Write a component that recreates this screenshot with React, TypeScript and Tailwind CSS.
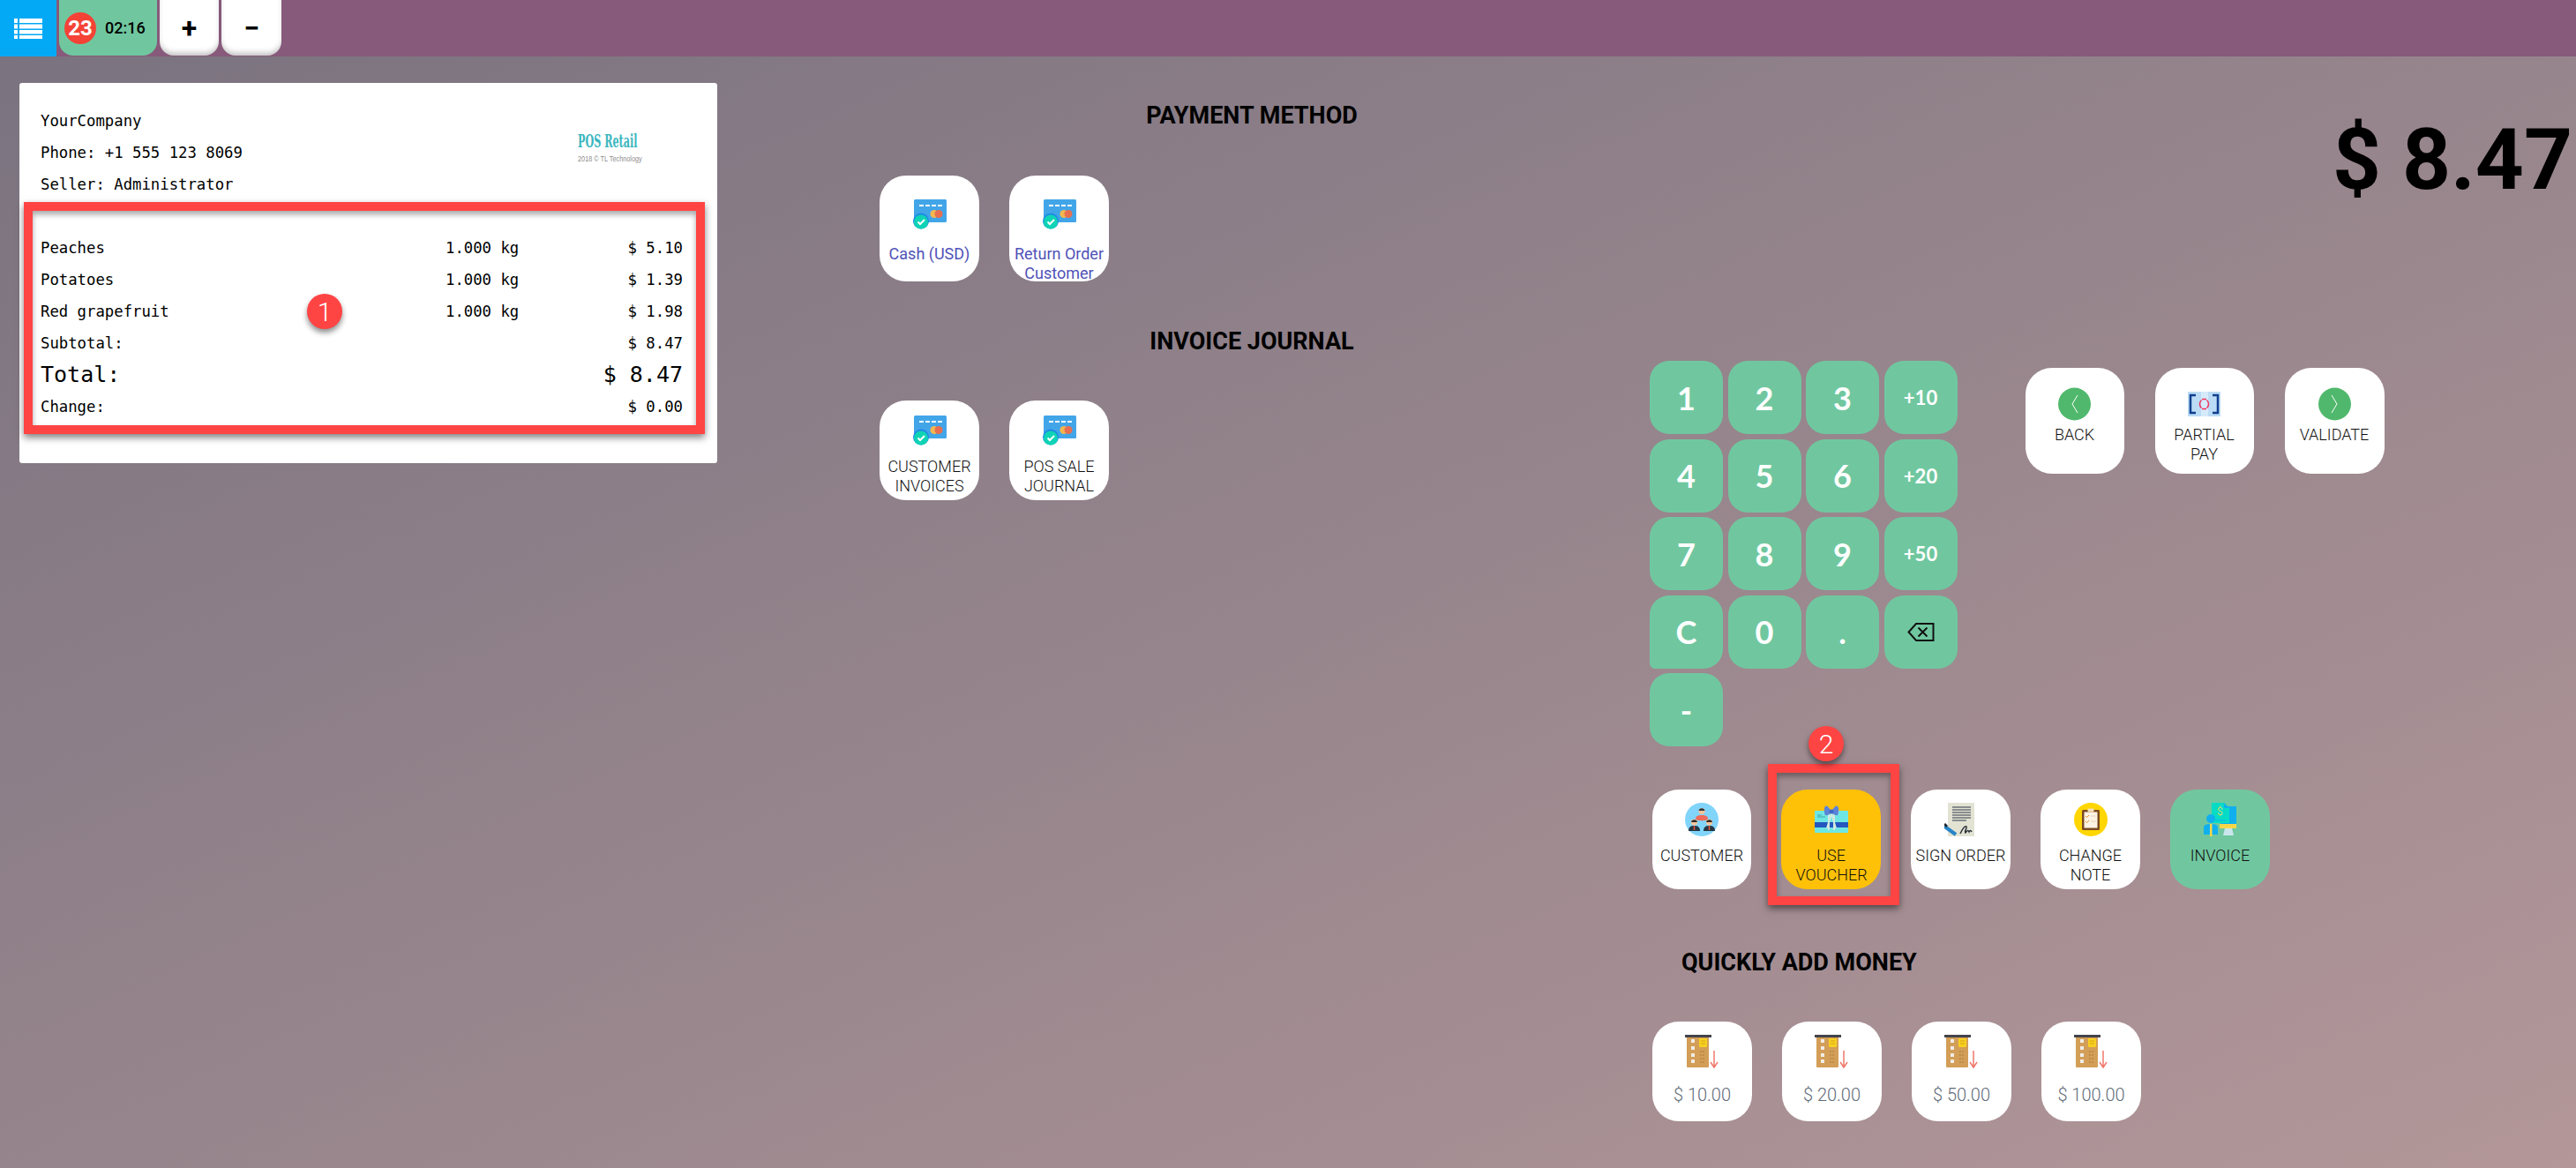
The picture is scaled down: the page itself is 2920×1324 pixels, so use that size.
import React from "react";

const roboto = "font-['Roboto',sans-serif]";

const CardIcon = () => (
  <svg width="38" height="34" viewBox="0 0 38 34" className="shrink-0">
    <rect x="1" y="0" width="37" height="26" rx="1.5" fill="#42a5e8" />
    <path d="M7 7h5M14 7h5M21 7h5M28 7h5" stroke="#fff" strokeWidth="2" />
    <circle cx="24" cy="16.5" r="4.5" fill="#f4b750" />
    <circle cx="29" cy="16.5" r="4.5" fill="#e76f51" />
    <circle cx="9" cy="24.5" r="9" fill="#1e88e5" />
    <circle cx="9" cy="25.5" r="8" fill="#0fd3b5" />
    <path d="M5.5 25.5l2.5 2.5 5-5" fill="none" stroke="#fff" strokeWidth="2" />
  </svg>
);

const ArrowCircle = ({ dir }: { dir: "left" | "right" }) => (
  <svg width="37" height="38" viewBox="0 0 37 38">
    <circle cx="18.5" cy="19" r="18.5" fill="#50b86c" />
    <path d={dir === "left" ? "M22 9l-6 10 6 10" : "M15 9l6 10-6 10"} fill="none" stroke="#fff" strokeWidth="1" />
  </svg>
);

const PartialIcon = () => (
  <svg width="37" height="28" viewBox="0 0 37 28">
    <rect width="37" height="28" fill="#bcdcf5" />
    <rect x="15" width="8" height="28" fill="#d6ebfa" />
    <path d="M9 4H3v20h6M28 4h6v20h-6" fill="none" stroke="#0f3f8f" strokeWidth="2.500" />
    <path d="M15.500 9.500a6 6 0 0 0 0 9M21.500 9.500a6 6 0 0 1 0 9M16 8.500h5M16 19.500h5" fill="none" stroke="#f0325a" strokeWidth="1.500" />
  </svg>
);

const CustomerIcon = () => (
  <svg width="38" height="38" viewBox="0 0 38 38">
    <circle cx="19" cy="19" r="19" fill="#81d4fa" />
    <path d="M12 18c0-3 3-4 7-4s7 1 7 4-14 3-14 0z" fill="#ef6a5a" />
    <circle cx="19" cy="9.500" r="3.600" fill="#f6c49a" />
    <path d="M15.500 9a3.600 3.600 0 0 1 7 0z" fill="#26323d" />
    <path d="M4 32c0-5 3-6 6.500-6s6.500 1 6.500 6z" fill="#263744" />
    <circle cx="10.500" cy="22" r="3.600" fill="#f6c49a" />
    <path d="M7 22a3.600 3.600 0 0 1 7 0z" fill="#2f2a28" />
    <path d="M21 32c0-5 3-6 6.500-6s6.500 1 6.500 6z" fill="#263744" />
    <circle cx="27.500" cy="22" r="3.600" fill="#f6c49a" />
    <path d="M24 22a3.600 3.600 0 0 1 7 0z" fill="#2f2a28" />
    <path d="M10.500 26v5M27.500 26v5" stroke="#e5533d" strokeWidth="1.500" />
  </svg>
);

const VoucherIcon = () => (
  <svg width="38" height="38" viewBox="0 0 38 38">
    <rect x="0" y="9" width="38" height="25" rx="1" fill="#6ee7e4" />
    <rect x="0" y="22" width="38" height="6" fill="#2457c0" />
    <path d="M3 14h5M3 16h9" stroke="#3aa7a7" strokeWidth="1" />
    <path d="M16 12L16 31M22 12L22 31M19 12L14 29M19 12L24 29" stroke="#cfe9df" strokeWidth="2" />
    <path d="M19 10C15 3 13 3 12 4c-2 2-1 9 0 10 2 1 6-1 7-4zM19 10c4-7 6-7 7-6 2 2 1 9 0 10-2 1-6-1-7-4z" fill="#5b84d8" />
    <circle cx="19" cy="10" r="2.500" fill="#3f66c4" />
  </svg>
);

const SignIcon = () => (
  <svg width="38" height="38" viewBox="0 0 38 38">
    <rect x="4" y="0" width="30" height="38" fill="#e2e3d3" />
    <path d="M9 5h21M9 8h21M9 11h21M9 14h21M9 17h21M9 20h16" stroke="#6b7278" strokeWidth="1.500" />
    <path d="M-1 26l14 10" stroke="#2785c9" strokeWidth="4" />
    <path d="M0 24l3 3" stroke="#1f2a33" strokeWidth="3" />
    <path d="M18 35c3-6 5-9 7-8 1 2-3 6-1 7 2-3 3-3 4-1 1-2 2-2 3 0" fill="none" stroke="#2b3138" strokeWidth="1.500" />
  </svg>
);

const NoteIcon = () => (
  <svg width="38" height="38" viewBox="0 0 38 38">
    <circle cx="19" cy="19" r="19" fill="#ffd600" />
    <rect x="9" y="8" width="20" height="23" rx="1.500" fill="#7b4a21" />
    <rect x="11.500" y="10.500" width="15" height="18" fill="#fdf3e4" />
    <rect x="15.500" y="6.500" width="7" height="4" rx="1" fill="#f5deb8" />
    <path d="M13 15l1.500 1.500 2.500-2.500M13 21l1.500 1.500 2.500-2.500" fill="none" stroke="#ef8a1f" strokeWidth="1" />
    <path d="M19 15h6M19 21h6" stroke="#e3d6bf" strokeWidth="1" />
  </svg>
);

const InvoiceIcon = () => (
  <svg width="38" height="38" viewBox="0 0 38 38">
    <rect x="19" y="4" width="18" height="22" fill="#10b0ee" />
    <path d="M9 0h14l6 6v17H9z" fill="#06dcc5" />
    <path d="M23 0l6 6h-6z" fill="#10b0ee" />
    <text x="15" y="14" fontSize="12" fontFamily="Roboto" fill="#ffd54f">$</text>
    <path d="M13 20h12" stroke="#10b0ee" strokeWidth="1" />
    <rect x="18" y="24" width="19" height="5" fill="#f7d74a" />
    <path d="M24 29h8l2 8H22z" fill="#c9e6ee" />
    <circle cx="8" cy="18" r="5" fill="#10b0ee" />
    <path d="M0 36V28c0-3 3-4 8-4s8 1 8 4v8z" fill="#10b0ee" />
    <rect x="7" y="24" width="2.500" height="14" fill="#f7d74a" />
  </svg>
);

const MoneyIcon = () => (
  <svg width="39" height="38" viewBox="0 0 39 38">
    <rect x="2" y="1" width="25" height="36" rx="1" fill="#d39e57" />
    <rect x="0" y="0" width="30" height="3" fill="#43434b" />
    <path d="M7 5h4v4H7zM7 13h4v4H7zM7 21h4v4H7zM7 28h4v4H7z" fill="#f0ece6" />
    <rect x="16" y="4" width="9" height="10" rx="1" fill="#f7d020" />
    <path d="M18 7h5M18 10h5" stroke="#d9a514" strokeWidth="1" />
    <path d="M18 18v14M21 18v14" stroke="#a97a3d" strokeWidth="1" strokeDasharray="2 2" />
    <path d="M33 18v19M29 31l4 6 4-6" fill="none" stroke="#f0776a" strokeWidth="1.500" />
  </svg>
);

const BackspaceIcon = () => (
  <svg width="31" height="21" viewBox="0 0 31 21">
    <path d="M29.500 1H10L1.500 10.500 10 20h19.500z" fill="none" stroke="#111" strokeWidth="2" />
    <path d="M12.500 5.500l10 10M22.500 5.500l-10 10" stroke="#111" strokeWidth="2" />
  </svg>
);

// rows of the receipt: name, quantity, price
const lines = [
  { name: "Peaches", qty: "1.000 kg", price: "$ 5.10" },
  { name: "Potatoes", qty: "1.000 kg", price: "$ 1.39" },
  { name: "Red grapefruit", qty: "1.000 kg", price: "$ 1.98" },
];

const Receipt = () => (
  <div className="w-[791px] h-[431px] bg-white rounded-[3px] pl-6 pr-[39px] pt-[25px] font-['DejaVu_Sans_Mono',monospace] text-[17.3px] leading-9 text-black">
    <div className="flex justify-between">
      <div>
        <div>YourCompany</div>
        <div>Phone: +1 555 123 8069</div>
        <div>Seller: Administrator</div>
      </div>
      <div className="mt-[31px] mr-11 w-[75px]">
        <div className="origin-left scale-x-[0.56] font-['DejaVu_Serif',serif] font-bold text-[20px] leading-[20px] text-[#3bb6bf] whitespace-nowrap">POS Retail</div>
        <div className="origin-left scale-x-[0.77] font-['Liberation_Sans',sans-serif] text-[9.500px] leading-[20px] text-[#8d8d8d] whitespace-nowrap">2018 © TL Technology</div>
      </div>
    </div>
    <div className="mt-9">
      {lines.map((l) => (
        <div key={l.name} className="flex">
          <div className="w-[459px]">{l.name}</div>
          <div className="w-[135px]">{l.qty}</div>
          <div className="flex-1 text-right">{l.price}</div>
        </div>
      ))}
      <div className="flex justify-between">
        <div>Subtotal:</div>
        <div>$ 8.47</div>
      </div>
      <div className="flex justify-between text-[25px]">
        <div>Total:</div>
        <div>$ 8.47</div>
      </div>
      <div className="flex justify-between">
        <div>Change:</div>
        <div>$ 0.00</div>
      </div>
    </div>
  </div>
);

const Tile = ({
  icon,
  children,
  className = "",
  h = "h-[113px]",
  top = "pt-[15px]",
}: {
  icon: React.ReactNode;
  children: React.ReactNode;
  className?: string;
  h?: string;
  top?: string;
}) => (
  <div className={`${h} ${top} rounded-[30px] flex flex-col items-center overflow-hidden shrink-0 text-center text-[18px] leading-[22px] ${roboto} ${className}`}>
    <div className="h-[38px] shrink-0 flex items-center justify-center">{icon}</div>
    <div className="shrink-0">{children}</div>
  </div>
);

const Heading = ({ children, className = "" }: { children: React.ReactNode; className?: string }) => (
  <div className={`${roboto} font-bold text-[27px] leading-[30px] text-black ${className}`}>{children}</div>
);

const keys = ["1", "2", "3", "+10", "4", "5", "6", "+20", "7", "8", "9", "+50", "C", "0", ".", "", "-"];

const Numpad = () => (
  <div className="grid grid-cols-[repeat(4,83px)] auto-rows-[83px] gap-x-[5.500px] gap-y-[5.500px]">
    {keys.map((k, i) =>
      k === "" ? (
        <div key={i} className="bg-[#70c79f] rounded-[22px] flex items-center justify-center">
          <BackspaceIcon />
        </div>
      ) : (
        <div
          key={i}
          className={`bg-[#70c79f] rounded-[22px] flex items-center justify-center text-white font-['Lato',sans-serif] font-bold ${k.startsWith("+") ? "text-[22px]" : "text-[36px]"} ${k === "C" ? "rounded-bl-[6px]" : ""}`}
        >
          {k}
        </div>
      )
    )}
  </div>
);

const Marker = ({ n, className }: { n: number; className: string }) => (
  <div className={`absolute w-10 h-10 rounded-full bg-[#ff4444] text-white flex items-center justify-center text-[30px] shadow-[0_4px_6px_rgba(0,0,0,0.45)] ${roboto} font-light ${className}`}>
    {n}
  </div>
);

export default function App() {
  return (
    <div className="relative w-[2920px] h-[1324px] overflow-hidden flex flex-col bg-gradient-to-br from-[#79727f] to-[#b39799]">
      {/* Top bar */}
      <div className="h-16 shrink-0 bg-[#875a7b] flex">
        <div className="w-16 h-16 bg-[#03a9f4] flex items-center justify-center">
          <svg width="32" height="26" viewBox="0 0 32 26" fill="#fff">
            <path d="M0 2h4v5H0zM6 2h26v5H6zM0 8.500h4v5H0zM6 8.500h26v5H6zM0 15h4v4.500H0zM6 15h26v4.500H6zM0 21h4v4H0zM6 21h26v4H6z" />
          </svg>
        </div>
        <div className="ml-[3px] w-[111px] h-[63px] bg-[#70c79f] rounded-b-[16px] flex items-center pl-[6px]">
          <div className={`w-9 h-9 rounded-full bg-[#f44336] text-white flex items-center justify-center font-bold text-[24px] ${roboto}`}>23</div>
          <div className={`ml-[10px] text-[18px] font-medium text-black ${roboto}`}>02:16</div>
        </div>
        <div className={`ml-[3px] w-[67px] h-[63px] bg-white rounded-b-[16px] shadow-[inset_0_-5px_6px_-2px_rgba(0,0,0,0.25)] flex items-center justify-center font-bold text-[32px] text-black ${roboto}`}>+</div>
        <div className={`ml-[3px] w-[68px] h-[63px] bg-white rounded-b-[16px] shadow-[inset_0_-5px_6px_-2px_rgba(0,0,0,0.25)] flex items-center justify-center font-bold text-[32px] text-black ${roboto}`}>−</div>
      </div>

      <div className="flex-1 flex">
        {/* Receipt column */}
        <div className="w-[997px] shrink-0 pl-[22px] pt-[30px]">
          <Receipt />
        </div>

        {/* Payment column */}
        <div className="w-[873px] shrink-0">
          <Heading className="w-[844px] mt-[52px] text-center">PAYMENT METHOD</Heading>
          <div className="mt-[53px] flex gap-[34px]">
            <Tile h="h-[120px]" top="pt-[25px]" icon={<CardIcon />} className="w-[113px] bg-white text-[#4f52b8]">
              <div className="mt-[15px]">Cash (USD)</div>
            </Tile>
            <Tile h="h-[120px]" top="pt-[25px]" icon={<CardIcon />} className="w-[113px] bg-white text-[#4f52b8]">
              <div className="mt-[15px]">Return Order Customer</div>
            </Tile>
          </div>
          <Heading className="w-[844px] mt-[53px] text-center">INVOICE JOURNAL</Heading>
          <div className="mt-[52px] flex gap-[34px]">
            <Tile icon={<CardIcon />} className="w-[113px] bg-white font-light text-[#111]">
              <div className="mt-[11px]">CUSTOMER INVOICES</div>
            </Tile>
            <Tile icon={<CardIcon />} className="w-[113px] bg-white font-light text-[#111]">
              <div className="mt-[11px]">POS SALE JOURNAL</div>
            </Tile>
          </div>
        </div>

        {/* Numpad and actions */}
        <div className="flex-1">
          <div className={`h-[345px] pr-[4px] pt-[62px] text-right font-bold text-[96px] leading-[110px] text-black ${roboto}`}>$ 8.47</div>
          <div className="flex">
            <Numpad />
            <div className="ml-[77px] mt-2 flex gap-[35px]">
              <Tile h="h-[120px]" top="pt-[22px]" icon={<ArrowCircle dir="left" />} className="w-[112px] bg-white font-light text-[#111]">
                <div className="mt-[5px]">BACK</div>
              </Tile>
              <Tile h="h-[120px]" top="pt-[22px]" icon={<PartialIcon />} className="w-[112px] bg-white font-light text-[#111]">
                <div className="mt-[5px] w-[70px]">PARTIAL PAY</div>
              </Tile>
              <Tile h="h-[120px]" top="pt-[22px]" icon={<ArrowCircle dir="right" />} className="w-[113px] bg-white font-light text-[#111]">
                <div className="mt-[5px]">VALIDATE</div>
              </Tile>
            </div>
          </div>
          <div className="mt-[49px] ml-[3px] flex gap-[34px]">
            <Tile icon={<CustomerIcon />} className="w-[112px] bg-white font-light text-[#111]">
              <div className="mt-[11px]">CUSTOMER</div>
            </Tile>
            <Tile icon={<VoucherIcon />} className="w-[113px] bg-[#ffc107] font-light text-[#111]">
              <div className="mt-[11px] w-[80px]">USE VOUCHER</div>
            </Tile>
            <Tile icon={<SignIcon />} className="w-[113px] bg-white font-light text-[#111]">
              <div className="mt-[11px] whitespace-nowrap">SIGN ORDER</div>
            </Tile>
            <Tile icon={<NoteIcon />} className="w-[113px] bg-white font-light text-[#111]">
              <div className="mt-[11px] w-[80px]">CHANGE NOTE</div>
            </Tile>
            <Tile icon={<InvoiceIcon />} className="w-[113px] bg-[#70c79f] font-light text-[#111]">
              <div className="mt-[11px]">INVOICE</div>
            </Tile>
          </div>
          <Heading className="mt-[68px] ml-[36px]">QUICKLY ADD MONEY</Heading>
          <div className="mt-[52px] ml-[3px] flex gap-[34px]">
            {["$ 10.00", "$ 20.00", "$ 50.00", "$ 100.00"].map((v) => (
              <Tile key={v} icon={<MoneyIcon />} className="w-[113px] bg-white font-light text-[#5f6b78]">
                <div className="mt-[19px] text-[20px]">{v}</div>
              </Tile>
            ))}
          </div>
        </div>
      </div>

      {/* Annotations over the screenshot */}
      <div className="absolute left-[27px] top-[229px] w-[772px] h-[263px] border-[10px] border-[#ff4444] shadow-[0_4px_8px_rgba(0,0,0,0.5),inset_0_4px_6px_rgba(0,0,0,0.35)]" />
      <Marker n={1} className="left-[348px] top-[333px]" />
      <div className="absolute left-[2004px] top-[866px] w-[149px] h-[160px] border-[10px] border-[#ff4444] shadow-[0_4px_8px_rgba(0,0,0,0.5),inset_0_4px_6px_rgba(0,0,0,0.35)]" />
      <Marker n={2} className="left-[2050px] top-[823px]" />
    </div>
  );
}
